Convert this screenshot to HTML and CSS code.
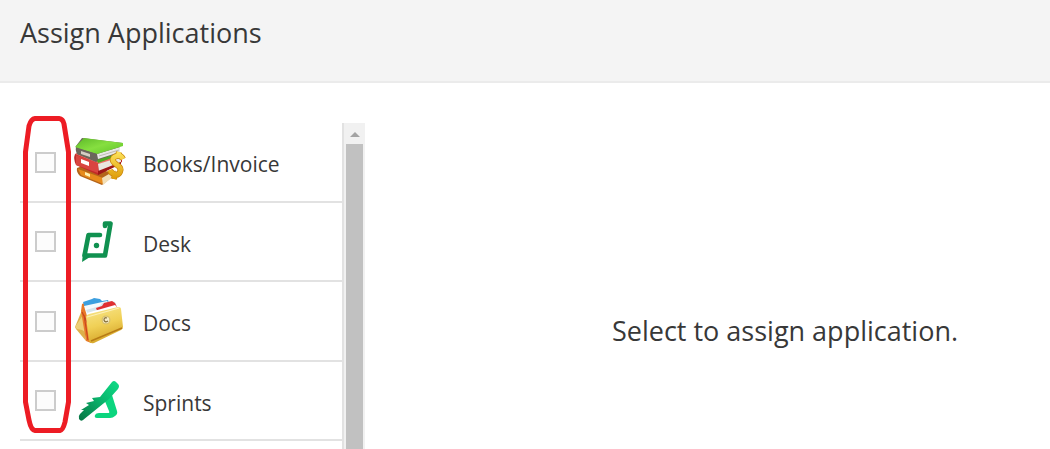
FILE: index.html
```html
<!DOCTYPE html>
<html lang="en">
<head>
<meta charset="utf-8">
<title>Assign Applications</title>
<link rel="stylesheet" href="styles.css">
</head>
<body>
<header class="header"><h1 class="title">Assign Applications</h1></header>
<main class="content">
  <section class="picker">
    <ul class="app-list">
      <li class="app-row">
        <label class="app">
          <input class="check" type="checkbox">
          <svg class="icon" viewBox="0 2 60 60" aria-hidden="true">
            <defs>
              <linearGradient id="gold" x1="0" y1="0" x2="0" y2="1"><stop offset="0" stop-color="#fde45c"/><stop offset="1" stop-color="#dd9a08"/></linearGradient>
              <linearGradient id="green" x1="0" y1="0" x2="1" y2="1"><stop offset="0" stop-color="#5cb828"/><stop offset=".5" stop-color="#86df40"/><stop offset="1" stop-color="#5fc428"/></linearGradient>
            </defs>
            <path d="M7 38l8-3 31 9-14 11-22-9q-4-4-3-8z" fill="#b3641a"/>
            <path d="M8 39l25 9v6L11 45z" fill="#e78b1c"/>
            <path d="M15 42l5 2v3l-5-2z" fill="#fff0b0"/>
            <path d="M32 48l14-8v4L33 55z" fill="#f2dfb8"/>
            <path d="M5 24l12-4 35 8v4L28 45 6 35q-3-6-1-11z" fill="#c22a28"/>
            <path d="M5 24l12-4 35 8-23 6z" fill="#ed6e63"/>
            <path d="M6 25l22 8v10L6 35z" fill="#d94540"/>
            <path d="M11 29l8 3v4l-8-3z" fill="#fff"/>
            <path d="M28 34l23-7v5L29 42z" fill="#e9e6df"/>
            <path d="M28 41l23-9v2L28 45z" fill="#9e1717"/>
            <path d="M6 16L12 8l41 5-3 3v6L26 32 7 24q-2-4-1-8z" fill="#6b665c"/>
            <path d="M27 24l23-7v5l-22 7z" fill="#e9e9e5"/>
            <path d="M29 26l20-6" stroke="#bdbbb5" fill="none"/>
            <path d="M5 17l9-9 39 5v3l-26 8z" fill="url(#green)"/>
            <path d="M6 18l21 6v7L7 24z" fill="#6b665c"/>
            <path d="M11 21l9 3v3l-9-3z" fill="#d5cfc4"/>
            <path d="M27 30l23-7v2l-22 8z" fill="#4daa20"/>
            <path d="M53 29q-2-4-6-3-5 1-4 5 1 2 4 4 5 3 3 7-2 4-6 2-3-1-4-4M49 22l-1 4M45 44l-1 5" fill="none" stroke="#c98408" stroke-width="6"/>
            <path d="M53 29q-2-4-6-3-5 1-4 5 1 2 4 4 5 3 3 7-2 4-6 2-3-1-4-4M49 22l-1 4M45 44l-1 5" fill="none" stroke="url(#gold)" stroke-width="4.500"/>
          </svg>
          <span class="name">Books/Invoice</span>
        </label>
      </li>
      <li class="app-row">
        <label class="app">
          <input class="check" type="checkbox">
          <svg class="icon" viewBox="0 0 60 60" aria-hidden="true">
            <path d="M30 23H18.500L14.500 43.500H35L40.500 11.500H35V14" fill="none" stroke="#109150" stroke-width="4.600" stroke-linejoin="round" stroke-linecap="round"/>
            <path d="M12 50l1-9 7 4z" fill="#109150"/>
            <circle cx="26.500" cy="33.500" r="2.700" fill="#109150"/>
          </svg>
          <span class="name">Desk</span>
        </label>
      </li>
      <li class="app-row">
        <label class="app">
          <input class="check" type="checkbox">
          <svg class="icon" viewBox="0 1 60 60" aria-hidden="true">
            <defs><linearGradient id="wallet" x1=".2" y1="0" x2=".5" y2="1"><stop offset="0" stop-color="#f7e488"/><stop offset=".5" stop-color="#f0d056"/><stop offset="1" stop-color="#d4a226"/></linearGradient></defs>
            <path d="M5 37l7-17 4 31-10-12z" fill="#ddb04a"/>
            <path d="M5 37l8-12 2 17-3-2-5-1z" fill="#edcf78"/>
            <path d="M12 14l7-3 2 42-5-2-5-30z" fill="#e87a28"/>
            <path d="M14 25l4 25M12 22l6 12" stroke="#c84520" stroke-width="1.200"/>
            <path d="M13 12l9-3 2-1 6 1 2 2 6-1 3 8-24 6z" fill="#3c9fdf"/>
            <path d="M14 16l23-5 6 8-26 7z" fill="#f5fafc"/>
            <path d="M16 20l14-4 2-3 9-2 4 1 3 7-28 9z" fill="#d7e5ec"/>
            <path d="M26 18l6-2 2-3 8-2 3 2 3 6-20 4z" fill="#df3032"/>
            <path d="M17 23l28-8 4 4-29 9z" fill="#fff"/>
            <path d="M16 27q0-2 3-3l29-7q3 0 3 2l2 18q0 2-2 3l-27 13q-4 1-5-2z" fill="url(#wallet)"/>
            <path d="M17 27l32-9" stroke="#fcf0b8" stroke-width="1.200"/>
            <path d="M21 51l31-13" stroke="#b77b15" stroke-width="1.500"/>
            <circle cx="36" cy="30" r="4.500" fill="#d9c16b"/>
            <circle cx="36" cy="30" r="3.200" fill="#f7edc6"/>
            <path d="M37 28q-3-1-3 2 1 3 4 1" fill="none" stroke="#88733d" stroke-width="1.300"/>
          </svg>
          <span class="name">Docs</span>
        </label>
      </li>
      <li class="app-row">
        <label class="app">
          <input class="check" type="checkbox">
          <svg class="icon" viewBox="0 1 60 60" aria-hidden="true">
            <defs><linearGradient id="blade" x1="0" y1="1" x2="1" y2="0"><stop offset="0" stop-color="#087444"/><stop offset=".6" stop-color="#0abb70"/><stop offset="1" stop-color="#0fdc87"/></linearGradient></defs>
            <path d="M34 29l8-4 5 16q1 3-2 5-2 2-5 2H27q-3 0-2-3 1-2 4-2h9q2 0 1-2z" fill="#0bd57e"/>
            <path d="M42 12q2-2 4 0l2 2q2 2 0 5L39 29 13 50q-2 2-4-1-1-3 1-5l4-4h-3l8-5-3-2 8-2-2-3 8-1z" fill="url(#blade)"/>
          </svg>
          <span class="name">Sprints</span>
        </label>
      </li>
    </ul>
    <div class="scrollbar" aria-hidden="true">
      <span class="arrow"></span>
      <span class="thumb"></span>
    </div>
    <svg class="marker" viewBox="0 0 50 320" aria-hidden="true">
      <path d="M13 4.500H37Q41 5 42 10L46.500 38V288L43 308Q41 316 38 316.500H13Q9 316 7 306L3.500 288V38L7 12Q9 5 13 4.500Z"/>
    </svg>
  </section>
  <section class="details"><p class="message">Select to assign application.</p></section>
</main>
</body>
</html>
```
FILE: styles.css
```css
* { box-sizing: border-box; }

body {
  margin: 0;
  height: 100vh;
  display: flex;
  flex-direction: column;
  overflow: hidden;
  background: #fff;
  color: #383838;
  font-family: "Open Sans", "Noto Sans", sans-serif;
}

.header {
  padding: 15px 20px 30px;
  background: #f4f4f4;
  border-bottom: 2px solid #ebebeb;
}

.title, .message {
  margin: 0;
  font-size: 27px;
  font-weight: 400;
  line-height: 36px;
}

.content {
  flex: 1;
  min-height: 0;
  display: flex;
  padding: 40px 0 0 20px;
}

.picker {
  position: relative;
  display: flex;
  flex: 0 0 345px;
}

.app-list {
  flex: 1;
  display: grid;
  grid-auto-rows: 80px 79px;
  margin: 0;
  padding: 0;
  list-style: none;
}

.app-row { border-bottom: 2px solid #e2e2e2; }

.app {
  display: flex;
  align-items: center;
  height: 100%;
  padding-left: 15px;
}

.check {
  appearance: none;
  width: 21px;
  height: 21px;
  margin: 0 14px 0 0;
  border: 2px solid #ccc;
  background: #fcfcfc;
}

.check:checked { background: #109150; }

.icon {
  width: 60px;
  height: 60px;
}

.name {
  margin-left: 13px;
  padding-top: 4px;
  font-size: 21px;
  line-height: 28px;
}

.scrollbar {
  display: flex;
  flex-direction: column;
  width: 23px;
  padding: 0 2px;
  border-left: 2px solid #e2e2e2;
  background: #f1f1f1;
}

.arrow {
  align-self: center;
  margin: 9px 0 7px;
  border: 5px solid transparent;
  border-top: 0;
  border-bottom-color: #a3a3a3;
}

.thumb {
  flex: 1;
  background: #c1c1c1;
}

.marker {
  position: absolute;
  top: -9px;
  left: 2px;
  width: 50px;
  height: 320px;
  pointer-events: none;
  fill: none;
  stroke: #ed1c24;
  stroke-width: 5;
}

.details {
  flex: 1;
  padding: 190px 0 0 155px;
  text-align: center;
}
```
